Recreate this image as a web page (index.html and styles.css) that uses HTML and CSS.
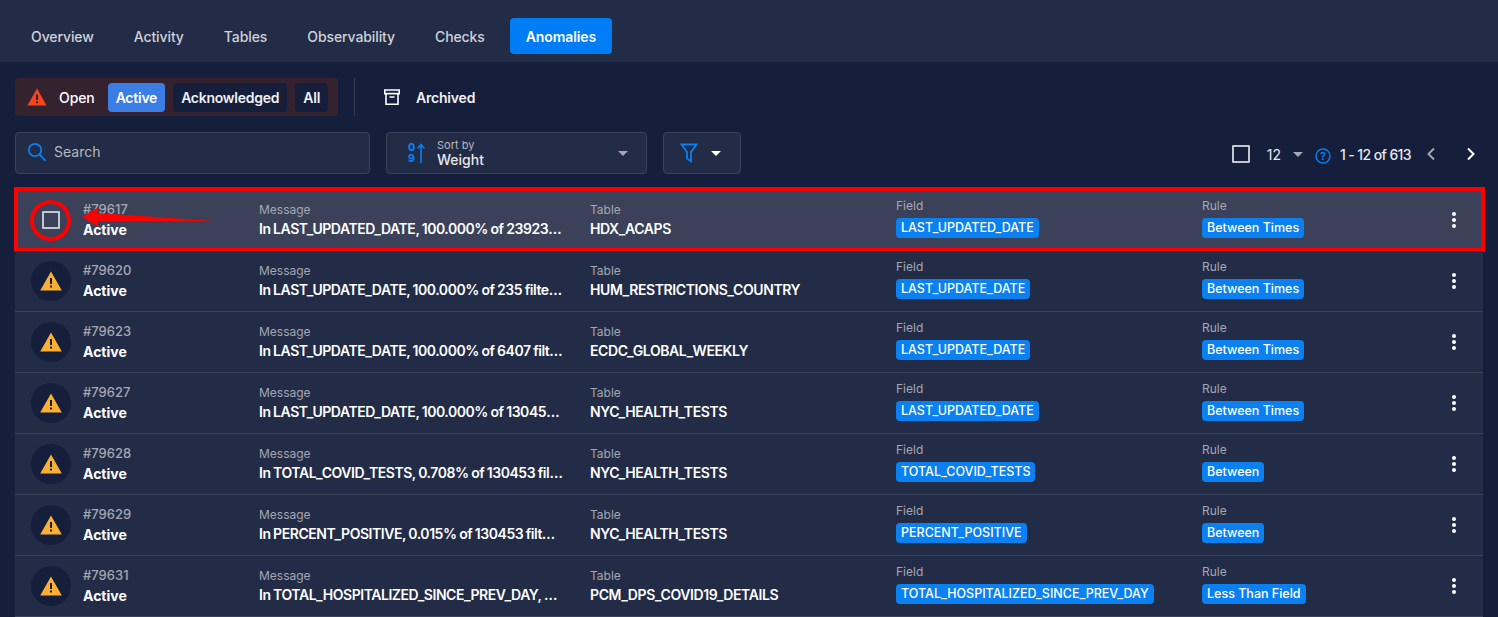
FILE: index.html
```html
<!DOCTYPE html>
<html lang="en">
<head>
<meta charset="UTF-8">
<meta name="viewport" content="width=device-width, initial-scale=1.0">
<title>Anomalies</title>
<link rel="stylesheet" href="styles.css">
</head>
<body>
  <nav class="tabs">
    <a class="tab">Overview</a>
    <a class="tab">Activity</a>
    <a class="tab">Tables</a>
    <a class="tab">Observability</a>
    <a class="tab">Checks</a>
    <a class="tab tab-active">Anomalies</a>
  </nav>

  <main class="content">
    <div class="status-row">
      <div class="status-group">
        <svg class="status-icon" width="20" height="18" viewBox="0 0 20 18"><path fill="#f4451f" fill-rule="evenodd" d="M10 0.5 19.6 17.5H0.4ZM9 6.5V12H11V6.5ZM9 13.3V15.3H11V13.3Z"/></svg>
        <span class="status-open">Open</span>
        <button class="status-btn status-btn-active">Active</button>
        <button class="status-btn">Acknowledged</button>
        <button class="status-btn">All</button>
      </div>
      <div class="status-divider"></div>
      <div class="archived">
        <svg width="16" height="16" viewBox="0 0 16 16" fill="none" stroke="#fff" stroke-width="1.6"><path d="M0.8 1H15.2V4.6H0.8ZM2 4.6V15.2H14V4.6M5.5 8H10.5"/></svg>
        <span>Archived</span>
      </div>
    </div>

    <div class="toolbar">
      <div class="box search">
        <svg width="20" height="20" viewBox="0 0 20 20" fill="none" stroke="#0a7ff0" stroke-width="1.8"><circle cx="8" cy="8" r="6.2"/><path d="M12.5 12.5 18.6 18.8"/></svg>
        <span class="search-text">Search</span>
      </div>
      <div class="box sort">
        <svg width="20" height="22" viewBox="0 0 20 22"><text class="sort-digit" x="2" y="8.5">0</text><text class="sort-digit" x="2" y="20">9</text><path d="M15 21V3M11.5 6.5 15 2.5 18.5 6.5" fill="none" stroke="#0a7ff0" stroke-width="1.6"/></svg>
        <div class="sort-text">
          <span class="sort-label">Sort by</span>
          <span class="sort-value">Weight</span>
        </div>
        <span class="caret caret-grey sort-caret"></span>
      </div>
      <div class="box filter">
        <svg width="18" height="20" viewBox="0 0 18 20" fill="none" stroke="#0a7ff0" stroke-width="1.8"><path d="M1.5 1.5H16.5L11 9V18.3L7 15.5V9Z"/></svg>
        <span class="caret"></span>
      </div>
      <div class="pager">
        <span class="checkbox"></span>
        <span class="pager-size">12</span>
        <span class="caret caret-grey"></span>
        <svg class="pager-help" width="16" height="16" viewBox="0 0 16 16"><circle cx="8" cy="8" r="7" fill="none" stroke="#0a7ff0" stroke-width="1.4"/><text x="8" y="12" text-anchor="middle">?</text></svg>
        <span class="pager-range">1 - 12 of 613</span>
        <svg class="pager-prev" width="10" height="14" viewBox="0 0 10 14" fill="none" stroke="#a3a7b3" stroke-width="2"><path d="M8 1.5 2.5 7 8 12.5"/></svg>
        <svg class="pager-next" width="10" height="14" viewBox="0 0 10 14" fill="none" stroke="#fff" stroke-width="2"><path d="M2 1.5 7.5 7 2 12.5"/></svg>
      </div>
    </div>

    <div class="list">
      <div class="row row-selected">
        <div class="avatar"><span class="checkbox"></span></div>
        <div class="cell"><span class="row-id">#79617</span><span class="row-status">Active</span></div>
        <div class="cell"><span class="label">Message</span><span class="value value-message">In LAST_UPDATED_DATE, 100.000% of 23923 filtered records</span></div>
        <div class="cell"><span class="label">Table</span><span class="value">HDX_ACAPS</span></div>
        <div class="cell cell-tag"><span class="label">Field</span><span class="badge">LAST_UPDATED_DATE</span></div>
        <div class="cell cell-tag"><span class="label">Rule</span><span class="badge">Between Times</span></div>
        <div class="dots"><i></i><i></i><i></i></div>
        <div class="mark-box"></div>
        <div class="mark-ring"></div>
        <svg class="mark-arrow" width="134" height="26" viewBox="0 0 134 26"><path fill="#f00" d="M0 12 17 2 15 8 131 16 15 16.5 17 22Z"/></svg>
      </div>

      <div class="row">
        <div class="avatar"><svg class="warn" width="22" height="20" viewBox="0 0 22 20"><path fill="#fbb034" fill-rule="evenodd" d="M11 0.5 21.8 19.5H0.2ZM10 7V13H12V7ZM10 14.4V16.4H12V14.4Z"/></svg></div>
        <div class="cell"><span class="row-id">#79620</span><span class="row-status">Active</span></div>
        <div class="cell"><span class="label">Message</span><span class="value value-message">In LAST_UPDATE_DATE, 100.000% of 235 filtered records</span></div>
        <div class="cell"><span class="label">Table</span><span class="value">HUM_RESTRICTIONS_COUNTRY</span></div>
        <div class="cell cell-tag"><span class="label">Field</span><span class="badge">LAST_UPDATE_DATE</span></div>
        <div class="cell cell-tag"><span class="label">Rule</span><span class="badge">Between Times</span></div>
        <div class="dots"><i></i><i></i><i></i></div>
      </div>

      <div class="row">
        <div class="avatar"><svg class="warn" width="22" height="20" viewBox="0 0 22 20"><path fill="#fbb034" fill-rule="evenodd" d="M11 0.5 21.8 19.5H0.2ZM10 7V13H12V7ZM10 14.4V16.4H12V14.4Z"/></svg></div>
        <div class="cell"><span class="row-id">#79623</span><span class="row-status">Active</span></div>
        <div class="cell"><span class="label">Message</span><span class="value value-message">In LAST_UPDATE_DATE, 100.000% of 6407 filtered records</span></div>
        <div class="cell"><span class="label">Table</span><span class="value">ECDC_GLOBAL_WEEKLY</span></div>
        <div class="cell cell-tag"><span class="label">Field</span><span class="badge">LAST_UPDATE_DATE</span></div>
        <div class="cell cell-tag"><span class="label">Rule</span><span class="badge">Between Times</span></div>
        <div class="dots"><i></i><i></i><i></i></div>
      </div>

      <div class="row">
        <div class="avatar"><svg class="warn" width="22" height="20" viewBox="0 0 22 20"><path fill="#fbb034" fill-rule="evenodd" d="M11 0.5 21.8 19.5H0.2ZM10 7V13H12V7ZM10 14.4V16.4H12V14.4Z"/></svg></div>
        <div class="cell"><span class="row-id">#79627</span><span class="row-status">Active</span></div>
        <div class="cell"><span class="label">Message</span><span class="value value-message">In LAST_UPDATED_DATE, 100.000% of 130453 filtered records</span></div>
        <div class="cell"><span class="label">Table</span><span class="value">NYC_HEALTH_TESTS</span></div>
        <div class="cell cell-tag"><span class="label">Field</span><span class="badge">LAST_UPDATED_DATE</span></div>
        <div class="cell cell-tag"><span class="label">Rule</span><span class="badge">Between Times</span></div>
        <div class="dots"><i></i><i></i><i></i></div>
      </div>

      <div class="row">
        <div class="avatar"><svg class="warn" width="22" height="20" viewBox="0 0 22 20"><path fill="#fbb034" fill-rule="evenodd" d="M11 0.5 21.8 19.5H0.2ZM10 7V13H12V7ZM10 14.4V16.4H12V14.4Z"/></svg></div>
        <div class="cell"><span class="row-id">#79628</span><span class="row-status">Active</span></div>
        <div class="cell"><span class="label">Message</span><span class="value value-message">In TOTAL_COVID_TESTS, 0.708% of 130453 filtered records</span></div>
        <div class="cell"><span class="label">Table</span><span class="value">NYC_HEALTH_TESTS</span></div>
        <div class="cell cell-tag"><span class="label">Field</span><span class="badge">TOTAL_COVID_TESTS</span></div>
        <div class="cell cell-tag"><span class="label">Rule</span><span class="badge">Between</span></div>
        <div class="dots"><i></i><i></i><i></i></div>
      </div>

      <div class="row">
        <div class="avatar"><svg class="warn" width="22" height="20" viewBox="0 0 22 20"><path fill="#fbb034" fill-rule="evenodd" d="M11 0.5 21.8 19.5H0.2ZM10 7V13H12V7ZM10 14.4V16.4H12V14.4Z"/></svg></div>
        <div class="cell"><span class="row-id">#79629</span><span class="row-status">Active</span></div>
        <div class="cell"><span class="label">Message</span><span class="value value-message">In PERCENT_POSITIVE, 0.015% of 130453 filtered records</span></div>
        <div class="cell"><span class="label">Table</span><span class="value">NYC_HEALTH_TESTS</span></div>
        <div class="cell cell-tag"><span class="label">Field</span><span class="badge">PERCENT_POSITIVE</span></div>
        <div class="cell cell-tag"><span class="label">Rule</span><span class="badge">Between</span></div>
        <div class="dots"><i></i><i></i><i></i></div>
      </div>

      <div class="row">
        <div class="avatar"><svg class="warn" width="22" height="20" viewBox="0 0 22 20"><path fill="#fbb034" fill-rule="evenodd" d="M11 0.5 21.8 19.5H0.2ZM10 7V13H12V7ZM10 14.4V16.4H12V14.4Z"/></svg></div>
        <div class="cell"><span class="row-id">#79631</span><span class="row-status">Active</span></div>
        <div class="cell"><span class="label">Message</span><span class="value value-message">In TOTAL_HOSPITALIZED_SINCE_PREV_DAY, 0.1% of records</span></div>
        <div class="cell"><span class="label">Table</span><span class="value">PCM_DPS_COVID19_DETAILS</span></div>
        <div class="cell cell-tag"><span class="label">Field</span><span class="badge">TOTAL_HOSPITALIZED_SINCE_PREV_DAY</span></div>
        <div class="cell cell-tag"><span class="label">Rule</span><span class="badge">Less Than Field</span></div>
        <div class="dots"><i></i><i></i><i></i></div>
      </div>
    </div>
  </main>
</body>
</html>
```

FILE: styles.css
```css
* {
  box-sizing: border-box;
}

html, body {
  height: 100%;
}

body {
  margin: 0;
  overflow: hidden;
  background-color: #151e3a;
  color: #fff;
  font-family: Inter, "Liberation Sans", sans-serif;
  font-size: 14px;
}

/* Tabs */
.tabs {
  display: flex;
  align-items: flex-end;
  gap: 8px;
  height: 62px;
  padding: 0 15px 8px;
  background-color: #232c47;
}

.tab {
  display: flex;
  align-items: center;
  height: 36px;
  padding: 0 16px;
  border-radius: 4px;
  color: #cfd1d8;
  font-weight: 500;
  letter-spacing: -0.1px;
}

.tab-active {
  margin-left: 1px;
  background-color: #007cf5;
  color: #fff;
  font-weight: 600;
}

.content {
  padding: 16px 15px 0;
}

/* Status filters */
.status-row {
  display: flex;
  align-items: center;
  height: 38px;
}

.status-group {
  display: flex;
  align-items: center;
  gap: 8px;
  width: 323px;
  height: 38px;
  padding-left: 12px;
  border-radius: 4px;
  background-color: #35222f;
}

.status-open {
  margin: 0 5px 0 4px;
  font-weight: 500;
  letter-spacing: -0.1px;
}

.status-btn {
  height: 29px;
  padding: 0 8px;
  border: 0;
  border-radius: 4px;
  background-color: #151e3a;
  color: #f0f1f4;
  font: 600 14px Inter, "Liberation Sans", sans-serif;
  letter-spacing: -0.25px;
}

.status-btn-active {
  background-color: #3a7de5;
  color: #fff;
}

.status-divider {
  width: 1px;
  height: 38px;
  margin: 0 29px 0 16px;
  background-color: #343c55;
}

.archived {
  display: flex;
  align-items: center;
  gap: 16px;
  font-weight: 600;
  color: #f0f1f4;
  letter-spacing: -0.2px;
}

/* Search, sort, pager */
.toolbar {
  display: flex;
  align-items: center;
  gap: 16px;
  margin-top: 16px;
  height: 42px;
}

.box {
  display: flex;
  align-items: center;
  height: 42px;
  border: 1px solid #3a4259;
  border-radius: 4px;
  background-color: #232c47;
}

.search {
  width: 355px;
  padding-left: 11px;
  padding-bottom: 2px;
  gap: 7px;
  color: #b4b7c1;
}

.search-text {
  margin-top: -2px;
}

.sort {
  width: 261px;
  padding: 0 19px;
  gap: 11px;
}

.sort-digit {
  fill: #0a7ff0;
  font: 800 10.5px Inter, sans-serif;
}

.sort-text {
  display: flex;
  flex-direction: column;
  flex: 1;
}

.sort-label {
  font-size: 11px;
  line-height: 13px;
  color: #b4b7c1;
}

.sort-value {
  font-size: 14px;
  line-height: 16px;
  font-weight: 500;
  color: #e6e7eb;
}

.filter {
  width: 78px;
  padding-left: 16px;
  gap: 13px;
}

.caret {
  width: 0;
  height: 0;
  border-left: 5.5px solid transparent;
  border-right: 5.5px solid transparent;
  border-top: 5.5px solid #fff;
}

.caret-grey {
  border-top-color: #a3a7b3;
}

.sort-caret {
  margin-right: -1px;
}

.pager {
  display: flex;
  align-items: center;
  margin-left: auto;
  padding: 2px 7px 0 0;
  color: #e6e7eb;
}

.checkbox {
  display: block;
  width: 18px;
  height: 18px;
  border: 2px solid #c3c6ce;
  border-radius: 1px;
}

.pager-size {
  margin: 0 12px 0 17px;
}

.pager-help {
  margin: 3px 9px 0 12px;
}

.pager-help text {
  fill: #0a7ff0;
  font: 600 11px Inter, sans-serif;
}

.pager-range {
  font-weight: 500;
  letter-spacing: -0.6px;
}

.pager-prev {
  margin-left: 15px;
}

.pager-next {
  margin-left: 30px;
}

/* Anomaly list */
.list {
  margin-top: 16px;
}

.row {
  position: relative;
  display: grid;
  grid-template-columns: 52px 176px 331px 306px 306px 1fr 4px;
  align-items: center;
  height: 61px;
  padding: 0 27px 0 16px;
  border-bottom: 1px solid #3a4259;
  background-color: #232c47;
}

.row-selected {
  border-bottom-color: transparent;
  background-color: #3a4159;
}

.avatar {
  display: flex;
  align-items: center;
  justify-content: center;
  width: 40px;
  height: 40px;
  border-radius: 50%;
  background-color: #151e3a;
}

.row-selected .avatar {
  background-color: transparent;
}

.cell {
  display: flex;
  flex-direction: column;
  align-items: flex-start;
  min-width: 0;
}

.cell-tag {
  margin-bottom: 5px;
}

.label, .row-id {
  font-size: 12px;
  line-height: 18px;
  color: #a3a7b3;
}

.row-id {
  font-size: 13px;
  font-weight: 500;
}

.row-status {
  margin-top: 2px;
  font-weight: 700;
  line-height: 20px;
}

.value {
  width: 302px;
  overflow: hidden;
  white-space: nowrap;
  text-overflow: ellipsis;
  font-size: 14px;
  font-weight: 600;
  line-height: 20px;
  letter-spacing: -0.4px;
}

.value-message {
  width: 304px;
  letter-spacing: -0.45px;
  word-spacing: -0.5px;
}

.badge {
  margin-top: 3px;
  padding: 0 5px;
  border-radius: 4px;
  background-color: #0b80f0;
  font-size: 12.5px;
  font-weight: 500;
  line-height: 20px;
  white-space: nowrap;
}

.dots {
  display: flex;
  flex-direction: column;
  gap: 2px;
}

.dots i {
  display: block;
  width: 4px;
  height: 4px;
  border-radius: 50%;
  background-color: #fff;
}

/* Red marks drawn over the first row */
.mark-box {
  position: absolute;
  inset: -3px -2px -2px -1px;
  border: 4px solid #f00;
}

.mark-ring {
  position: absolute;
  top: 10px;
  left: 15px;
  width: 41px;
  height: 41px;
  border: 4px solid #f00;
  border-radius: 50%;
}

.mark-arrow {
  position: absolute;
  top: 15px;
  left: 67px;
}
```
